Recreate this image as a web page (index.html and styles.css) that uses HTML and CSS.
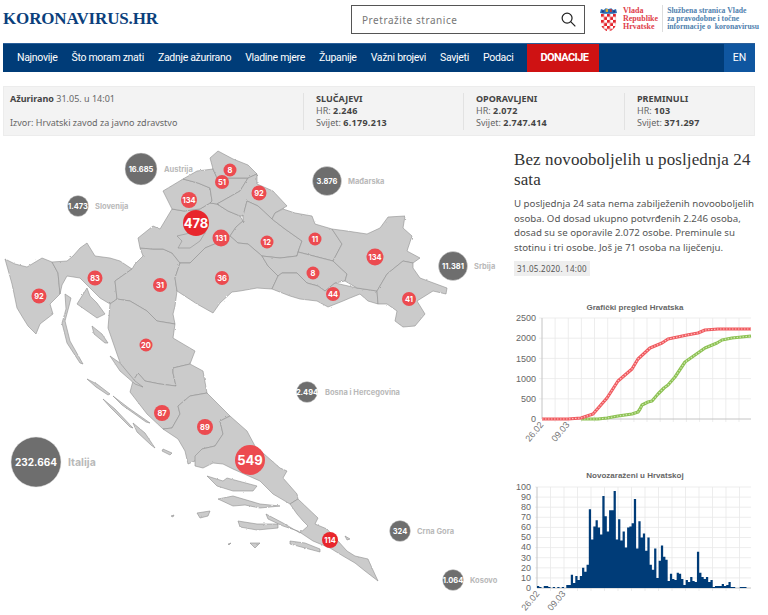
FILE: index.html
```html
<!DOCTYPE html>
<html lang="hr">
<head>
<meta charset="utf-8">
<title>Koronavirus.hr</title>
<link rel="stylesheet" href="styles.css">
</head>
<body>
<div class="page">
<header class="top">
  <a class="logo">KORONAVIRUS.HR</a>
  <div class="search">
    <span class="search-text">Pretražite stranice</span>
    <svg class="search-icon" viewBox="0 0 16 16"><circle cx="6.5" cy="6.5" r="5.3"/><path d="M10.3 10.3L15.3 15.3"/></svg>
  </div>
  <div class="gov">
    <svg class="arms" viewBox="0 0 18 26">
      <defs><pattern id="chk" width="6.4" height="6.4" patternUnits="userSpaceOnUse" x="1" y="7"><rect width="6.4" height="6.4" fill="#fff"/><rect width="3.2" height="3.2" fill="#e3232b"/><rect x="3.2" y="3.2" width="3.2" height="3.2" fill="#e3232b"/></pattern></defs>
      <path d="M1 7H17V17Q17 23 9 26Q1 23 1 17Z" fill="url(#chk)"/>
      <path d="M0 6L1 2L4 3L6 1L9 2L12 1L14 3L17 2L18 6L14 7H4Z" fill="#2a6db5"/>
      <rect x="6" y="2" width="2.5" height="3" fill="#e3b030"/><rect x="10.5" y="2" width="2" height="3" fill="#c33"/><rect x="2" y="3.5" width="2" height="2" fill="#223a7a"/><rect x="14" y="3.5" width="2" height="2" fill="#223a7a"/>
    </svg>
    <div class="gov-red">Vlada<br>Republike<br>Hrvatske</div>
    <div class="gov-blue">Službena stranica Vlade<br>za pravodobne i točne<br>informacije o&nbsp; koronavirusu</div>
  </div>
</header>
<nav class="nav">
  <a>Najnovije</a><a>Što moram znati</a><a>Zadnje ažurirano</a><a>Vladine mjere</a><a>Županije</a><a>Važni brojevi</a><a>Savjeti</a><a>Podaci</a>
  <a class="donate">DONACIJE</a>
  <a class="lang">EN</a>
</nav>
<section class="stats">
  <div class="stat-main">
    <div><b>Ažurirano</b> 31.05. u 14:01</div>
    <div>Izvor: Hrvatski zavod za javno zdravstvo</div>
  </div>
  <div class="stat"><b>SLUČAJEVI</b><span>HR: <b>2.246</b></span><span>Svijet: <b>6.179.213</b></span></div>
  <div class="stat"><b>OPORAVLJENI</b><span>HR: <b>2.072</b></span><span>Svijet: <b>2.747.414</b></span></div>
  <div class="stat"><b>PREMINULI</b><span>HR: <b>103</b></span><span>Svijet: <b>371.297</b></span></div>
</section>
<main class="main">
  <svg class="map" viewBox="3 140 502 475">
    <defs><filter id="rough" x="-5%" y="-5%" width="110%" height="110%"><feTurbulence type="fractalNoise" baseFrequency="0.35" numOctaves="2" seed="4"/><feDisplacementMap in="SourceGraphic" scale="2"/></filter></defs>
    <g class="land" filter="url(#rough)">
      <path d="M5 258L15 263L27 266L42 257L52 261L58 272L60 293L50 303L53 313L40 323L36 333L28 325L23 317L17 307L12 283Z"/>
      <path d="M52 261L67 260L73 255L80 247L87 242L95 255L110 257L120 260L132 268L115 280L117 298L110 303L100 297L88 285L80 277L67 275L62 284L60 293L58 272Z"/>
      <path d="M132 268L135 263L143 255L140 247L153 248L163 248L172 252L180 262L175 277L177 290L175 305L173 313L175 323L157 320L147 310L130 300L117 298L115 280Z"/>
      <path d="M138 237L153 225L160 228L172 208L184 210L200 208L210 202L217 203L228 210L240 215L243 220L236 226L230 235L217 242L205 247L197 255L190 262L180 262L172 252L163 248L153 248L140 247Z"/>
      <path d="M177 235L190 232L198 224L206 230L200 240L190 247L178 247L182 240Z"/>
      <path d="M172 208L163 190L183 178L198 182L210 187L212 200L210 202L200 208L184 210Z"/>
      <path d="M183 178L197 170L213 168L217 177L248 177L240 190L217 203L210 202L212 200L210 187L198 182Z"/>
      <path d="M210 157L218 150L233 158L248 164L257 173L248 177L217 177L213 168Z"/>
      <path d="M248 177L257 173L257 183L273 190L287 205L275 212L272 218L258 205L247 200L243 215L240 215L228 210L217 203L240 190Z"/>
      <path d="M243 220L243 215L247 200L258 205L272 218L285 228L302 240L298 251L297 255L280 257L262 255L248 243L238 242L230 235L236 226Z"/>
      <path d="M180 262L190 262L197 255L205 247L217 242L230 235L238 242L248 243L262 255L268 265L278 275L272 288L257 287L240 290L232 291L220 302L213 312L197 303L177 290L175 277Z"/>
      <path d="M272 218L275 212L283 208L295 212L312 215L315 223L332 228L342 243L333 260L298 251L302 240L285 228Z"/>
      <path d="M262 255L280 257L297 255L298 251L333 260L347 273L345 280L335 282L325 290L318 285L307 282L297 272L282 272L278 275L268 265Z"/>
      <path d="M278 275L282 272L297 272L307 282L318 285L325 290L335 282L357 287L377 290L378 303L368 300L360 293L350 297L343 300L328 306L317 300L300 298L290 295L272 288Z"/>
      <path d="M332 228L347 230L367 233L380 227L388 216L405 215L403 227L412 235L407 250L420 257L413 262L403 260L387 273L377 290L357 287L345 280L347 273L333 260L342 243Z"/>
      <path d="M403 260L413 262L413 267L420 277L447 287L446 293L433 290L417 300L425 313L415 325L403 326L395 320L397 310L387 303L378 303L377 290L387 273Z"/>
      <path d="M110 303L117 298L130 300L147 310L157 320L175 323L173 337L195 350L190 363L173 367L173 372L176 385L160 383L145 380L138 372L133 380L122 367L117 353L108 327Z"/>
      <path d="M133 380L138 372L145 380L160 383L176 385L173 372L173 367L190 363L203 370L207 392L190 395L178 405L180 413L172 427L163 428L147 413L130 391Z"/>
      <path d="M190 395L207 392L230 415L220 420L223 433L215 445L202 448L195 460L188 463L185 450L178 438L163 428L172 427L180 413L178 405Z"/>
      <path d="M230 415L247 430L255 445L280 467L287 470L283 477L297 493L298 498L290 503L273 493L260 480L233 468L223 463L213 462L203 467L195 465L195 455L202 448L215 445L223 433L220 420Z"/>
      <path d="M290 503L298 498L318 517L315 523L327 528L338 540L347 550L355 555L368 558L372 567L378 580L365 570L355 562L343 555L330 547L313 540L298 530L283 525L268 518L266 513L283 522L300 532L308 525L303 520L297 513Z"/>
      <path d="M87 287L77 303L97 317L105 313L97 302L90 295Z"/>
      <path d="M65 293L71 297L69 305L65 320L70 340L83 363L80 362L67 342L62 322L66 308Z"/>
      <path d="M92 325L102 333L108 342L105 342L94 333Z"/>
      <path d="M110 355L120 362L135 380L143 386L135 383L120 370Z"/>
      <path d="M87 378L97 383L110 393L108 394L96 386Z"/>
      <path d="M103 398L115 408L133 427L130 426L110 406Z"/>
      <path d="M113 395L130 408L150 422L146 421L122 404Z"/>
      <path d="M133 422L145 432L155 447L151 444L137 431Z"/>
      <path d="M163 448L172 452L170 454L162 450Z"/>
      <path d="M207 475L223 480L227 477L257 485L253 490L233 490L217 485Z"/>
      <path d="M218 498L233 495L260 503L280 505L260 507L245 504L233 505Z"/>
      <path d="M238 520L257 523L278 523L278 527L257 529L240 526Z"/>
      <path d="M290 540L305 542L320 548L320 551L305 547L290 543Z"/>
      <path d="M197 512L210 510L208 515L200 517Z"/>
      <path d="M250 542L260 542L255 547Z"/>
      <path d="M228 543L231 542L229 544Z"/>
      <path d="M171 515L174 514L173 516Z"/>
      <path d="M345 535L350 538L347 539Z"/>
    </g>
    <g class="world">
      <circle cx="141" cy="168" r="16"/><text x="141" y="168">16.685</text>
      <circle cx="78" cy="205" r="10.5"/><text x="78" y="205">1.473</text>
      <circle cx="327" cy="180" r="14.5"/><text x="327" y="180">3.876</text>
      <circle cx="453" cy="265" r="14.5"/><text x="453" y="265">11.381</text>
      <circle cx="307" cy="391" r="10.5"/><text x="307" y="391">2.494</text>
      <circle cx="400" cy="530" r="10.5"/><text x="400" y="530">324</text>
      <circle cx="453" cy="579" r="10.5"/><text x="453" y="579">1.064</text>
      <circle cx="36" cy="461" r="25"/><text class="large" x="36" y="461">232.664</text>
    </g>
    <g class="labels">
      <text x="164" y="168">Austrija</text>
      <text x="95" y="205">Slovenija</text>
      <text x="348" y="180">Mađarska</text>
      <text x="474" y="265">Srbija</text>
      <text x="325" y="391">Bosna i Hercegovina</text>
      <text x="417" y="530">Crna Gora</text>
      <text x="470" y="579">Kosovo</text>
      <text class="large" x="68" y="461">Italija</text>
    </g>
    <g class="counties">
      <circle cx="230" cy="169" r="6.5"/><text x="230" y="169">8</text>
      <circle cx="222" cy="181" r="7"/><text x="222" y="181">51</text>
      <circle cx="259" cy="192" r="7.5"/><text x="259" y="192">92</text>
      <circle cx="189" cy="199" r="8"/><text x="189" y="199">134</text>
      <circle class="hot" cx="196" cy="222" r="13"/><text class="large" x="196" y="222">478</text>
      <circle cx="221" cy="237" r="8.5"/><text x="221" y="237">131</text>
      <circle cx="267" cy="241" r="6.5"/><text x="267" y="241">12</text>
      <circle cx="315" cy="238" r="6.5"/><text x="315" y="238">11</text>
      <circle cx="375" cy="256" r="8.5"/><text x="375" y="256">134</text>
      <circle cx="95" cy="277" r="7.5"/><text x="95" y="277">83</text>
      <circle cx="160" cy="284" r="7"/><text x="160" y="284">31</text>
      <circle cx="222" cy="277" r="7"/><text x="222" y="277">36</text>
      <circle cx="39" cy="295" r="7.5"/><text x="39" y="295">92</text>
      <circle cx="146" cy="344" r="6.5"/><text x="146" y="344">20</text>
      <circle cx="313" cy="272" r="6.5"/><text x="313" y="272">8</text>
      <circle cx="333" cy="293" r="7"/><text x="333" y="293">44</text>
      <circle cx="409" cy="298" r="7"/><text x="409" y="298">41</text>
      <circle cx="162" cy="412" r="8"/><text x="162" y="412">87</text>
      <circle cx="205" cy="426" r="8"/><text x="205" y="426">89</text>
      <circle cx="250" cy="459" r="15"/><text class="large" x="250" y="459">549</text>
      <circle class="hot" cx="330" cy="539" r="8"/><text x="330" y="539">114</text>
    </g>
  </svg>
  <aside class="side">
    <div class="article">
      <h1>Bez novooboljelih u posljednja 24 sata</h1>
      <p>U posljednja 24 sata nema zabilježenih novooboljelih osoba. Od dosad ukupno potvrđenih 2.246 osoba, dosad su se oporavile 2.072 osobe. Preminule su stotinu i tri osobe. Još je 71 osoba na liječenju.</p>
      <span class="date">31.05.2020. 14:00</span>
    </div>
    <svg class="chart chart-a" viewBox="505 295 250 160">
      <text class="chart-title" x="635" y="309">Grafički pregled Hrvatska</text>
      <path class="grid" d="M539 317H751M539 337.2H751M539 357.4H751M539 377.6H751M539 397.8H751M555.1 317V421M568.3 317V421M581.4 317V421M594.5 317V421M607.7 317V421M620.8 317V421M633.9 317V421M647 317V421M660.2 317V421M673.3 317V421M686.4 317V421M699.6 317V421M712.7 317V421M725.8 317V421M739 317V421"/>
      <path class="axis" d="M542 317V418H751"/>
      <g class="ticks">
        <text x="536" y="320">2500</text><text x="536" y="340">2000</text><text x="536" y="361">1500</text><text x="536" y="381">1000</text><text x="536" y="401">500</text><text x="536" y="421">0</text>
      </g>
      <g class="xticks">
        <text transform="translate(544 424) rotate(-50)">26.02</text>
        <text transform="translate(570 424) rotate(-50)">09.03</text>
      </g>
      <polyline class="line-g" points="581,418 598,418 607,417 618,415 625,414 632,413 638,411 640,408 642,404 648,401 652,400 658,393 664,387 668,384 675,376 685,361 695,354 705,347 717,342 722,339 732,337 751,335"/>
      <polyline class="dots-g" points="581,418 598,418 607,417 618,415 625,414 632,413 638,411 640,408 642,404 648,401 652,400 658,393 664,387 668,384 675,376 685,361 695,354 705,347 717,342 722,339 732,337 751,335"/>
      <polyline class="line-r" points="542,418 568,418 581,417 593,413 607,397 618,380 632,368 638,358 650,347 662,342 668,338 687,334 698,332 705,329 718,328 751,328"/>
      <polyline class="dots-r" points="542,418 568,418 581,417 593,413 607,397 618,380 632,368 638,358 650,347 662,342 668,338 687,334 698,332 705,329 718,328 751,328"/>
    </svg>
    <svg class="chart chart-b" viewBox="505 455 250 160">
      <text class="chart-title" x="635" y="477">Novozaraženi u Hrvatskoj</text>
      <path class="grid" d="M535 486H751M535 496.1H751M535 506.2H751M535 516.3H751M535 526.4H751M535 536.5H751M535 546.6H751M535 556.7H751M535 566.8H751M535 576.9H751M550.5 486V590M564 486V590M577.5 486V590M591 486V590M604.5 486V590M618 486V590M631.5 486V590M645 486V590M658.5 486V590M672 486V590M685.5 486V590M699 486V590M712.5 486V590M726 486V590M739.5 486V590"/>
      <path class="axis" d="M537 486V587H751"/>
      <g class="ticks">
        <text x="531" y="489">100</text><text x="531" y="499">90</text><text x="531" y="509">80</text><text x="531" y="519">70</text><text x="531" y="529">60</text><text x="531" y="539">50</text><text x="531" y="549">40</text><text x="531" y="560">30</text><text x="531" y="570">20</text><text x="531" y="580">10</text><text x="531" y="590">0</text>
      </g>
      <g class="xticks">
        <text transform="translate(540 593) rotate(-50)">26.02</text>
        <text transform="translate(566 593) rotate(-50)">09.03</text>
      </g>
      <svg x="537" y="486" width="214" height="101" viewBox="0 0 95 100" preserveAspectRatio="none">
        <path class="bars" d="M0 100V98h1V99h1V100h1V98h2V99h1V100h1V99h1V100h1V99h1V100h1V99h1V100h1V97h2V87h1V95h1V88h1V92h1V88h1V80h1V84h1V77h1V22h1V52h1V39h1V33h1V40h1V47h1V9h1V29h1V44h1V23h2V4h1V52h1V32h1V53h1V44h1V60h1V40h1V39h1V36h1V12h1V61h1V34h1V50h1V46h1V63h1V50h1V77h1V82h1V61h1V90h1V73h1V58h1V69h1V72h1V93h1V86h1V91h1V92h1V85h1V86h1V91h1V97h1V92h1V94h1V89h1V93h1V94h1V64h1V85h1V89h1V91h1V89h1V94h1V92h1V99h1V98h3V96h1V98h1V97h1V94h1V99h2V100h2V99h3V100h1V100Z"/>
      </svg>
    </svg>
  </aside>
</main>
</div>
</body>
</html>
```

FILE: styles.css
```css
html, body { margin: 0; padding: 0; height: 615px; overflow: hidden; background: #fff; }
body { font-family: "Noto Sans", sans-serif; color: #555; }
.page { width: 752px; margin-left: 3px; }

.top { height: 43px; display: flex; align-items: flex-start; }
.logo { font: 700 17px/1 "Liberation Serif", serif; color: #0b3f7c; width: 348px; flex: none; padding-top: 10px; letter-spacing: -0.15px; }
.search { width: 214px; height: 27px; margin-top: 5px; border: 1px solid #555; display: flex; flex: none; align-items: center; justify-content: space-between; padding: 0 8px 0 10px; }
.search-text { font-size: 10px; letter-spacing: .55px; color: #777; }
.search-icon { width: 15px; height: 15px; fill: none; stroke: #222; stroke-width: 1.3; }
.gov { display: flex; flex: none; margin-left: 15px; margin-top: 5px; font-family: "Liberation Serif", serif; font-size: 8px; line-height: 8px; }
.arms { width: 17px; height: 25px; margin-right: 6px; margin-top: 2px; }
.gov-red { color: #e0404a; padding: 2px 4px 0 0; font-weight: 700; }
.gov-blue { color: #4f7fae; border-left: 1px solid #ddd; padding: 2px 0 0 4px; font-weight: 700; font-size: 7.7px; white-space: nowrap; }

.nav { height: 29px; background: #003c78; border-top: 1px solid #2a5f9a; box-sizing: border-box; display: flex; align-items: stretch; padding-left: 7px; font: 10.5px/28px Roboto, sans-serif; letter-spacing: -.3px; color: #fff; }
.nav a { padding: 0 7px; }
.nav .donate { background: #cf1213; font-weight: 700; padding: 0 13px; margin-left: 7px; width: 46px; font-size: 11px; letter-spacing: -.6px; }
.nav .lang { background: #0f56a0; margin-left: auto; width: 31px; padding: 0; text-align: center; letter-spacing: 0; }

.stats { height: 50px; margin-top: 14px; background: #f3f3f3; border: 1px solid #ececec; box-sizing: border-box; display: flex; align-items: center; font-size: 9px; line-height: 12.2px; color: #666; }
.stats b { color: #444; font-weight: 700; }
.stats span b { letter-spacing: .3px; }
.stat-main { width: 293px; padding-left: 6px; height: 37px; display: flex; flex-direction: column; justify-content: space-between; box-sizing: border-box; margin-right: 6px; }
.stat { height: 37px; width: 160px; box-sizing: border-box; border-left: 1px solid #e2e2e2; padding-left: 12px; display: flex; flex-direction: column; }
.stat:nth-child(3) { width: 161px; }
.stat:last-child { width: 130px; }

.main { display: flex; margin-top: 5px; height: 475px; }
.map { width: 502px; height: 475px; flex: none; display: block; }
.land path { fill: #cbcbcb; stroke: #8e8e8e; stroke-width: .6; }
.world circle { fill: #6e6e6e; stroke: #ddd; stroke-width: .5; }
.counties circle { fill: #ec4b50; }
.counties .hot { fill: #e8262c; }
.map text { font-family: Inter, sans-serif; font-weight: 700; font-size: 7.5px; dominant-baseline: central; }
.world text, .counties text { fill: #fff; text-anchor: middle; }
.labels text { fill: #b9b9b9; }
.map text.large { font-size: 10px; }
.counties text.large { font-size: 13px; }
.labels text.large { font-size: 10.5px; }

.side { width: 250px; flex: none; }
.article { padding-left: 9px; height: 155px; box-sizing: border-box; padding-top: 9px; }
.article h1 { font: 400 17px/19.5px "Liberation Serif", serif; letter-spacing: .1px; color: #333; margin: 0 0 8px; }
.article p { font-size: 9.7px; line-height: 14.6px; margin: 0 0 6px; color: #555; }
.date { display: block; width: max-content; background: #eee; font-size: 8px; line-height: 15px; padding: 0 3px; letter-spacing: .25px; color: #555; }
.chart { display: block; width: 250px; height: 160px; }
.chart-title { font: 700 8px "Liberation Sans", sans-serif; fill: #666; text-anchor: middle; }
.grid { stroke: #e9e9e9; stroke-width: .8; fill: none; }
.axis { stroke: #c4c4c4; stroke-width: 1; fill: none; }
.ticks text { font: 9px "Liberation Sans", sans-serif; fill: #666; text-anchor: end; }
.xticks text { font: 9px "Liberation Sans", sans-serif; fill: #777; text-anchor: end; }
.line-r, .line-g { fill: none; stroke-width: 3.2; stroke-linejoin: round; }
.line-r { stroke: #ef5a5f; }
.line-g { stroke: #8cc152; }
.dots-r, .dots-g { fill: none; stroke-width: 1.2; stroke-dasharray: 1.5 1.5; }
.dots-r { stroke: #fbb; }
.dots-g { stroke: #cfe6b0; }
.bars { fill: #003c78; }
```
